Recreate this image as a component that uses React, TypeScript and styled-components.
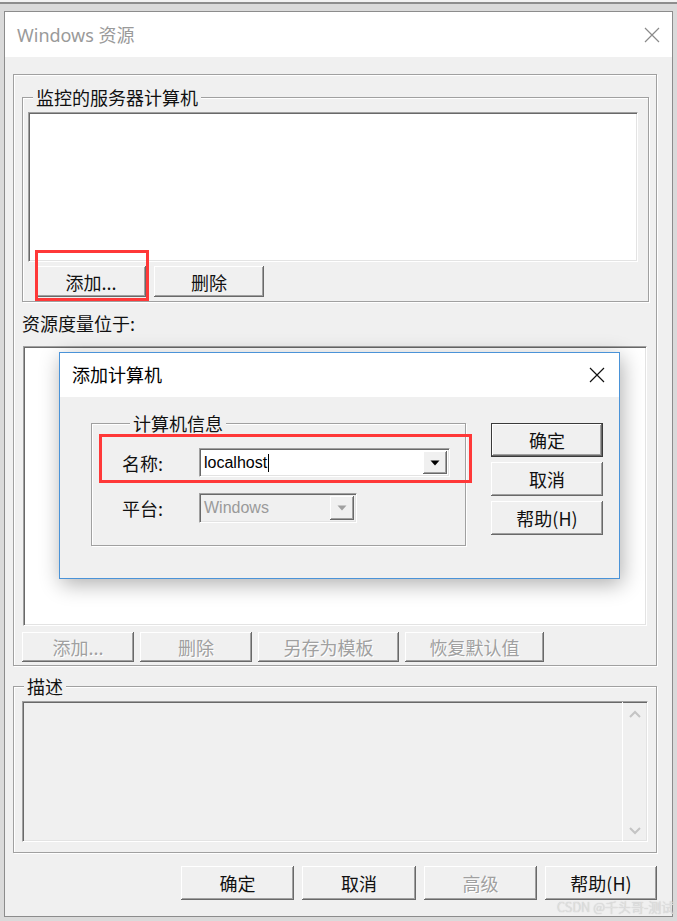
import React from 'react';
import styled, { createGlobalStyle } from 'styled-components';

const CJK = `"Noto Sans CJK SC", "Noto Sans", sans-serif`;
const LATIN = `"Liberation Sans", Arial, sans-serif`;

const Global = createGlobalStyle`
  html, body { margin: 0; padding: 0; background: #d9d9d9; }
  body { font-family: ${CJK}; }
  * { box-sizing: border-box; }
`;

const Page = styled.div`
  position: relative;
  width: 677px;
  height: 921px;
  overflow: hidden;
  padding: 11px 4px 0 4px;
  background: linear-gradient(#f2f2f2 0 2px, #8d8d8d 2px 4px, #dadada 4px 100%);
`;

const Window = styled.div`
  width: 669px;
  height: 906px;
  border: 1px solid #8c8c8c;
  display: flex;
  flex-direction: column;
  background: #f0f0f0;
`;

const TitleBar = styled.div<{ $h: number; $padL: number; $padR: number }>`
  height: ${(p) => p.$h}px;
  flex: none;
  background: #fff;
  display: flex;
  align-items: center;
  justify-content: space-between;
  padding: 0 ${(p) => p.$padR}px 0 ${(p) => p.$padL}px;
`;

const TitleText = styled.span<{ $active?: boolean }>`
  font-family: "Noto Sans", ${CJK};
  font-size: 18px;
  line-height: 22px;
  color: ${(p) => (p.$active ? '#000' : '#9a9a9a')};
`;

const Body = styled.div`
  position: relative;
  flex: 1;
  display: flex;
  flex-direction: column;
  padding: 17px 15px 0 8px;
`;

const Etched = styled.div<{ $padT?: number; $padB?: number; $padL?: number; $padR?: number }>`
  border: 1px solid #a0a0a0;
  box-shadow: inset 1px 1px 0 #fff, 1px 1px 0 #fff;
  padding: ${(p) => p.$padT ?? 0}px ${(p) => p.$padR ?? 0}px ${(p) => p.$padB ?? 0}px
    ${(p) => p.$padL ?? 0}px;
  display: flex;
  flex-direction: column;
`;

const OuterBox = styled(Etched)``;

const GroupBox = styled(Etched)<{ $mt?: number; $w?: number }>`
  margin-top: ${(p) => p.$mt ?? 0}px;
  ${(p) => (p.$w ? `width: ${p.$w}px; flex: none;` : '')}
`;

const Caption = styled.div<{ $ml: number }>`
  width: fit-content;
  margin: -11px 0 0 ${(p) => p.$ml}px;
  padding: 0 3px;
  background: #f0f0f0;
  font-size: 18px;
  line-height: 20px;
  color: #111;
  white-space: nowrap;
`;

const Sunken = styled.div<{ $h: number; $mt: number; $ml: number; $mr: number; $bg: string }>`
  height: ${(p) => p.$h}px;
  margin: ${(p) => p.$mt}px ${(p) => p.$mr}px 0 ${(p) => p.$ml}px;
  background: ${(p) => p.$bg};
  border-top: 1px solid #a0a0a0;
  border-left: 1px solid #a0a0a0;
  border-bottom: 1px solid #fff;
  border-right: 1px solid #fff;
  box-shadow: inset 1px 1px 0 #696969, inset -1px -1px 0 #e3e3e3;
  display: flex;
  justify-content: flex-end;
`;

const ButtonRow = styled.div<{ $mt: number; $ml?: number; $gap: number; $end?: boolean }>`
  display: flex;
  gap: ${(p) => p.$gap}px;
  margin: ${(p) => p.$mt}px 0 0 ${(p) => p.$ml ?? 0}px;
  justify-content: ${(p) => (p.$end ? 'flex-end' : 'flex-start')};
`;

const Btn = styled.button<{ $w: number; $h: number; $default?: boolean }>`
  width: ${(p) => p.$w}px;
  height: ${(p) => p.$h}px;
  flex: none;
  padding: 0;
  margin: 0;
  background: #f0f0f0;
  border: ${(p) => (p.$default ? '1px solid #3a3a3a' : 'none')};
  box-shadow: inset -1px -1px 0 #696969, inset 1px 1px 0 #fff, inset -2px -2px 0 #a0a0a0;
  font-family: ${CJK};
  font-size: 18px;
  line-height: 20px;
  color: ${(p) => (p.disabled ? '#a0a0a0' : '#111')};
  text-shadow: ${(p) => (p.disabled ? '1px 1px 0 #fff' : 'none')};
  cursor: default;
`;

const FieldLabel = styled.div<{ $mt: number; $ml: number }>`
  margin: ${(p) => p.$mt}px 0 0 ${(p) => p.$ml}px;
  font-size: 18px;
  line-height: 20px;
  color: #111;
`;

const ScrollBar = styled.div`
  width: 25px;
  height: 100%;
  border-left: 1px solid #fff;
  display: flex;
  flex-direction: column;
  justify-content: space-between;
  align-items: center;
  padding: 8px 0 6px;
`;

const Dialog = styled.div`
  position: absolute;
  left: 54px;
  top: 295px;
  width: 561px;
  height: 227px;
  border: 1px solid #4a93d8;
  background: #f0f0f0;
  box-shadow: 2px 5px 20px rgba(0, 0, 0, 0.32);
  display: flex;
  flex-direction: column;
`;

const DialogBody = styled.div`
  flex: 1;
  display: flex;
  align-items: flex-start;
  padding: 26px 16px 0 31px;
`;

const InfoRow = styled.div<{ $mt: number }>`
  display: flex;
  align-items: center;
  margin-top: ${(p) => p.$mt}px;
`;

const RowLabel = styled.span`
  width: 77px;
  font-size: 18px;
  line-height: 20px;
  color: #111;
`;

const Combo = styled.div<{ $w: number; $h: number; $disabled?: boolean }>`
  width: ${(p) => p.$w}px;
  height: ${(p) => p.$h}px;
  display: flex;
  align-items: center;
  background: ${(p) => (p.$disabled ? '#f0f0f0' : '#fff')};
  border-top: 1px solid #a0a0a0;
  border-left: 1px solid #a0a0a0;
  border-bottom: 1px solid #fff;
  border-right: 1px solid #fff;
  box-shadow: inset 1px 1px 0 #696969, inset -1px -1px 0 #e3e3e3;
  padding: 2px 2px 2px 4px;
`;

const ComboText = styled.span<{ $disabled?: boolean }>`
  flex: 1;
  display: flex;
  align-items: center;
  font-family: ${LATIN};
  font-size: 16px;
  line-height: 20px;
  color: ${(p) => (p.$disabled ? '#9a9a9a' : '#000')};
`;

const Caret = styled.span`
  width: 1px;
  height: 18px;
  background: #000;
  margin-left: 1px;
`;

const DropBtn = styled.div<{ $disabled?: boolean }>`
  width: 24px;
  height: 100%;
  flex: none;
  background: #f0f0f0;
  box-shadow: inset -1px -1px 0 #696969, inset 1px 1px 0 #fff, inset -2px -2px 0 #a0a0a0;
  display: flex;
  align-items: center;
  justify-content: center;
  color: ${(p) => (p.$disabled ? '#a0a0a0' : '#000')};
`;

const BtnColumn = styled.div`
  margin-left: 25px;
  display: flex;
  flex-direction: column;
  gap: 5px;
`;

const Highlight = styled.div<{ $l: number; $t: number; $w: number; $h: number }>`
  position: absolute;
  left: ${(p) => p.$l}px;
  top: ${(p) => p.$t}px;
  width: ${(p) => p.$w}px;
  height: ${(p) => p.$h}px;
  border: 3px solid #ff3838;
  pointer-events: none;
`;

const Watermark = styled.div`
  position: absolute;
  left: 557px;
  top: 898px;
  font-family: ${CJK};
  font-size: 13px;
  font-weight: 300;
  line-height: 18px;
  color: #e4e4e4;
  text-shadow: 0 0 1px #a8a8a8;
  white-space: nowrap;
`;

const CloseIcon = ({ color }: { color: string }) => (
  <svg width="16" height="16" viewBox="0 0 16 16">
    <path d="M1 1 L15 15 M15 1 L1 15" stroke={color} strokeWidth="1.2" fill="none" />
  </svg>
);

const TriDown = () => (
  <svg width="10" height="6" viewBox="0 0 10 6">
    <path d="M0.5 0.5 H9.5 L5 5.5 Z" fill="currentColor" />
  </svg>
);

const Chevron = ({ up }: { up?: boolean }) => (
  <svg width="12" height="8" viewBox="0 0 12 8">
    <path
      d={up ? 'M1 7 L6 2 L11 7' : 'M1 1 L6 6 L11 1'}
      stroke="#c4c4c4"
      strokeWidth="2"
      fill="none"
    />
  </svg>
);

export default function App() {
  return (
    <Page>
      <Global />
      <Window>
        <TitleBar $h={45} $padL={12} $padR={12}>
          <TitleText>Windows 资源</TitleText>
          <CloseIcon color="#8a8a8a" />
        </TitleBar>
        <Body>
          <OuterBox $padT={22} $padB={3} $padL={8} $padR={7}>
            <GroupBox $padB={4}>
              <Caption $ml={10}>监控的服务器计算机</Caption>
              <Sunken $h={150} $mt={5} $ml={5} $mr={10} $bg="#fff" />
              <ButtonRow $mt={4} $ml={13} $gap={8}>
                <Btn $w={110} $h={31}>添加...</Btn>
                <Btn $w={110} $h={31}>删除</Btn>
              </ButtonRow>
            </GroupBox>
            <FieldLabel $mt={11} $ml={0}>资源度量位于:</FieldLabel>
            <Sunken $h={280} $mt={13} $ml={1} $mr={2} $bg="#fff" />
            <ButtonRow $mt={6} $gap={6}>
              <Btn $w={112} $h={30} disabled>添加...</Btn>
              <Btn $w={112} $h={30} disabled>删除</Btn>
              <Btn $w={141} $h={30} disabled>另存为模板</Btn>
              <Btn $w={139} $h={30} disabled>恢复默认值</Btn>
            </ButtonRow>
          </OuterBox>
          <GroupBox $mt={20} $padB={10}>
            <Caption $ml={10}>描述</Caption>
            <Sunken $h={141} $mt={5} $ml={8} $mr={8} $bg="#f0f0f0">
              <ScrollBar>
                <Chevron up />
                <Chevron />
              </ScrollBar>
            </Sunken>
          </GroupBox>
          <ButtonRow $mt={13} $gap={8} $end>
            <Btn $w={113} $h={34}>确定</Btn>
            <Btn $w={114} $h={34}>取消</Btn>
            <Btn $w={113} $h={34} disabled>高级</Btn>
            <Btn $w={112} $h={34}>帮助(H)</Btn>
          </ButtonRow>

          <Highlight $l={30} $t={193} $w={114} $h={51} />

          <Dialog>
            <TitleBar $h={44} $padL={12} $padR={14}>
              <TitleText $active>添加计算机</TitleText>
              <CloseIcon color="#111" />
            </TitleBar>
            <DialogBody>
              <GroupBox $w={375} $padL={30} $padB={22}>
                <Caption $ml={8}>计算机信息</Caption>
                <InfoRow $mt={15}>
                  <RowLabel>名称:</RowLabel>
                  <Combo $w={251} $h={29}>
                    <ComboText>
                      localhost
                      <Caret />
                    </ComboText>
                    <DropBtn>
                      <TriDown />
                    </DropBtn>
                  </Combo>
                </InfoRow>
                <InfoRow $mt={16}>
                  <RowLabel>平台:</RowLabel>
                  <Combo $w={158} $h={30} $disabled>
                    <ComboText $disabled>Windows</ComboText>
                    <DropBtn $disabled>
                      <TriDown />
                    </DropBtn>
                  </Combo>
                </InfoRow>
              </GroupBox>
              <BtnColumn>
                <Btn $w={112} $h={34} $default>确定</Btn>
                <Btn $w={112} $h={34}>取消</Btn>
                <Btn $w={112} $h={34}>帮助(H)</Btn>
              </BtnColumn>
            </DialogBody>
            <Highlight $l={39} $t={81} $w={373} $h={49} />
          </Dialog>
        </Body>
      </Window>
      <Watermark>CSDN @千头哥-测试</Watermark>
    </Page>
  );
}
